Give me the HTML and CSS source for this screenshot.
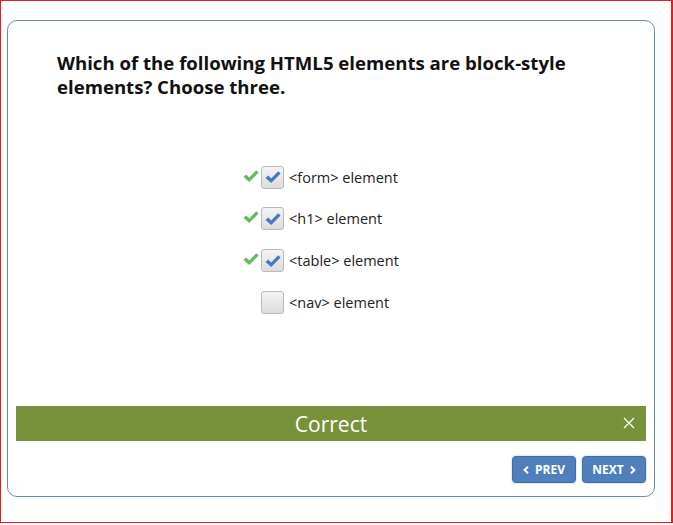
FILE: index.html
```html
<!DOCTYPE html>
<html>
<head>
<meta charset="utf-8">
<link rel="stylesheet" href="styles.css">
</head>
<body>
<div class="frame">
  <div class="card">
    <h1 class="question">Which of the following HTML5 elements are block-style elements? Choose three.</h1>
    <ul class="options">
      <li class="option">
        <span class="mark"><svg viewBox="0 0 16 16" width="16" height="16"><path d="M0.5 9 L3.2 6.6 L6.2 9.4 L13.2 2.2 L15.6 4.6 L6.2 14 Z" fill="#62bb5e"/></svg></span>
        <span class="box checked"><svg viewBox="0 0 16 16" width="16" height="16"><path d="M0.5 9 L3.2 6.6 L6.2 9.4 L13.2 2.2 L15.6 4.6 L6.2 14 Z" fill="#4479c4"/></svg></span>
        <span class="label">&lt;form&gt; element</span>
      </li>
      <li class="option">
        <span class="mark"><svg viewBox="0 0 16 16" width="16" height="16"><path d="M0.5 9 L3.2 6.6 L6.2 9.4 L13.2 2.2 L15.6 4.6 L6.2 14 Z" fill="#62bb5e"/></svg></span>
        <span class="box checked"><svg viewBox="0 0 16 16" width="16" height="16"><path d="M0.5 9 L3.2 6.6 L6.2 9.4 L13.2 2.2 L15.6 4.6 L6.2 14 Z" fill="#4479c4"/></svg></span>
        <span class="label">&lt;h1&gt; element</span>
      </li>
      <li class="option">
        <span class="mark"><svg viewBox="0 0 16 16" width="16" height="16"><path d="M0.5 9 L3.2 6.6 L6.2 9.4 L13.2 2.2 L15.6 4.6 L6.2 14 Z" fill="#62bb5e"/></svg></span>
        <span class="box checked"><svg viewBox="0 0 16 16" width="16" height="16"><path d="M0.5 9 L3.2 6.6 L6.2 9.4 L13.2 2.2 L15.6 4.6 L6.2 14 Z" fill="#4479c4"/></svg></span>
        <span class="label">&lt;table&gt; element</span>
      </li>
      <li class="option">
        <span class="mark"></span>
        <span class="box"></span>
        <span class="label">&lt;nav&gt; element</span>
      </li>
    </ul>
    <div class="spacer"></div>
    <div class="feedback">
      <span class="feedback-text">Correct</span>
      <span class="close"><svg viewBox="0 0 12 12" width="12" height="12"><path d="M1 1 L11 11 M11 1 L1 11" stroke="#fff" stroke-width="1.3" fill="none"/></svg></span>
    </div>
    <div class="nav">
      <button class="btn"><svg class="chev" viewBox="0 0 6 8" width="6" height="8"><path d="M5 0.8 L1.6 4 L5 7.2" stroke="#fff" stroke-width="2" fill="none"/></svg>PREV</button>
      <button class="btn">NEXT<svg class="chev right" viewBox="0 0 6 8" width="6" height="8"><path d="M1 0.8 L4.4 4 L1 7.2" stroke="#fff" stroke-width="2" fill="none"/></svg></button>
    </div>
  </div>
</div>
</body>
</html>
```
FILE: styles.css
```css
html, body {
  margin: 0;
  padding: 0;
  background: #fff;
}
.frame {
  width: 673px;
  height: 523px;
  box-sizing: border-box;
  border: 1px solid #e41c1c;
  border-right-width: 2px;
  padding: 19px 0 0 6px;
  font-family: "Open Sans", "Noto Sans", sans-serif;
}
.card {
  width: 648px;
  height: 477px;
  box-sizing: border-box;
  border: 1px solid #6f8aa8;
  border-radius: 10px;
  display: flex;
  flex-direction: column;
  padding: 30px 8px 13px 8px;
}
.question {
  margin: 0 0 0 41px;
  font-size: 18.6px;
  line-height: 24px;
  font-weight: 700;
  color: #111;
  width: 560px;
}
.options {
  list-style: none;
  margin: 67px 0 0 227px;
  padding: 0;
  display: flex;
  flex-direction: column;
  gap: 19.8px;
}
.option {
  display: flex;
  align-items: center;
  height: 22px;
}
.mark {
  width: 16px;
  height: 16px;
  margin-right: 2px;
  display: flex;
  margin-top: -3px;
}
.box {
  width: 23px;
  height: 23px;
  box-sizing: border-box;
  border: 1px solid #b9b9b9;
  border-radius: 3px;
  background: linear-gradient(#f4f4f4, #dcdcdc);
  display: flex;
  align-items: center;
  justify-content: center;
  margin-right: 5px;
}
.label {
  font-size: 14.5px;
  color: #222;
}
.spacer {
  flex: 1;
}
.feedback {
  height: 35px;
  background: #77923b;
  display: flex;
  align-items: center;
  justify-content: center;
  position: relative;
  color: #fff;
}
.feedback-text {
  font-size: 21px;
  font-weight: 400;
}
.close {
  position: absolute;
  right: 11px;
  top: 11px;
  display: flex;
}
.nav {
  display: flex;
  justify-content: flex-end;
  gap: 6px;
  margin-top: 15px;
}
.btn {
  width: 64px;
  height: 27px;
  box-sizing: border-box;
  border: 1px solid #3e6ea8;
  border-radius: 4px;
  background: #4f80bd;
  color: #fff;
  font-family: "Open Sans", sans-serif;
  font-weight: 700;
  font-size: 12px;
  display: flex;
  align-items: center;
  justify-content: center;
  padding: 0;
  box-shadow: 0 0 2px rgba(0,0,0,0.3);
}
.chev {
  margin-right: 6px;
}
.chev.right {
  margin-right: 0;
  margin-left: 6px;
}
```
